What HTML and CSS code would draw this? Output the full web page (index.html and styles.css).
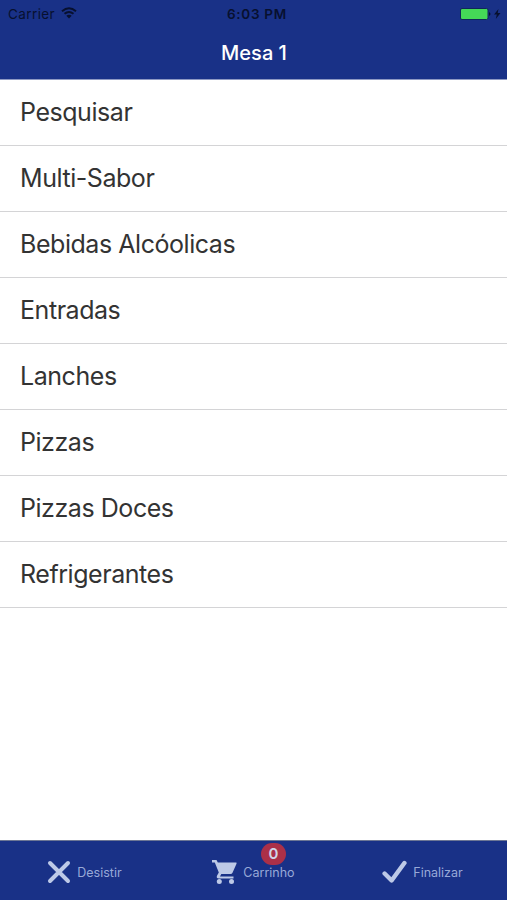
FILE: index.html
```html
<!DOCTYPE html>
<html lang="pt">
<head>
<meta charset="utf-8">
<title>Mesa 1</title>
<link rel="stylesheet" href="styles.css">
</head>
<body>
<header class="header">
  <div class="status">
    <div class="carrier"><span>Carrier</span>
      <svg width="16" height="12" viewBox="0 0 16 12" fill="none" stroke="#07102f" stroke-width="1.9"><path d="M1 4.200Q8-1.800 15 4.200M3.500 6.800Q8 3 12.500 6.800"/><path d="M5.300 8.800Q8 6.800 10.700 8.800L8 11.500z" fill="#07102f" stroke="none"/></svg>
    </div>
    <div class="clock">6:03 PM</div>
    <div class="power">
      <svg width="41" height="12" viewBox="0 0 41 12"><rect x="0.500" y="0.500" width="27.500" height="11" rx="1.500" fill="#45d957" stroke="#102759"/><path d="M29 4q3 2 0 4z" fill="#07102f"/><path d="M38.500 1l-4.500 5.500h2.800l-1 4.500 4.700-6h-2.800z" fill="#07102f"/></svg>
    </div>
  </div>
  <h1 class="title">Mesa 1</h1>
</header>
<main class="list">
  <div class="row"><span>Pesquisar</span></div>
  <div class="row"><span>Multi-Sabor</span></div>
  <div class="row"><span>Bebidas Alcóolicas</span></div>
  <div class="row"><span>Entradas</span></div>
  <div class="row"><span>Lanches</span></div>
  <div class="row"><span>Pizzas</span></div>
  <div class="row"><span>Pizzas Doces</span></div>
  <div class="row"><span>Refrigerantes</span></div>
</main>
<nav class="tabs">
  <div class="tab"><svg width="24" height="24" viewBox="0 0 24 24" fill="none" stroke="#bdc9e7" stroke-width="4" stroke-linecap="round"><path d="M3 3l18 18M21 3L3 21"/></svg><span>Desistir</span></div>
  <div class="tab cart"><svg width="25" height="24" viewBox="0 0 25 24" fill="#bdc9e7"><path d="M0 0h4.500l1.300 2.500H24q1 0 .5 1.300l-4 9q-.6 1.200-2 1.200H9.300l-1.300 2.500h13.500V18.500H7q-3.200-.2-1.900-3.100l1.700-2.800L2.800 2.500H0z"/><circle cx="7.300" cy="21.500" r="2.500"/><circle cx="19.500" cy="21.500" r="2.500"/></svg><span>Carrinho</span><b class="badge">0</b></div>
  <div class="tab"><svg width="25" height="24" viewBox="0 0 25 24" fill="none" stroke="#bdc9e7" stroke-width="4.400" stroke-linecap="round"><path d="M2.600 13.500l7 7L22.400 3" stroke-linejoin="round"/></svg><span>Finalizar</span></div>
</nav>
</body>
</html>
```
FILE: styles.css
```css
* { box-sizing: border-box; }
body { margin: 0; height: 900px; display: flex; flex-direction: column; overflow: hidden; background: #fff; font-family: Inter, sans-serif; color: #333; }
.header { height: 80px; background: #193187; border-bottom: 1px solid #8e99c3; }
.status { height: 27px; display: grid; grid-template-columns: 1fr 1fr 1fr; align-items: center; padding: 0 6px 0 8px; color: #07102f; font-size: 13.500px; }
.carrier { display: flex; align-items: center; gap: 6px; letter-spacing: 0.4px; }
.carrier svg { margin-top: -2px; }
.clock { padding-left: 5px; text-align: center; font-weight: 600; letter-spacing: 0.7px; }
.power { display: flex; justify-content: flex-end; }
.title { margin: 11px 0 0; padding-left: 1px; text-align: center; color: #fff; font-size: 20px; line-height: 30px; font-weight: 500; }
.list { flex: 1; }
.row { height: 66px; display: flex; align-items: center; padding: 0 0 2px 20px; border-bottom: 1px solid #d4d4d6; font-size: 25px; letter-spacing: -0.45px; }
.tabs { height: 60px; display: grid; grid-template-columns: 1fr 1fr 1fr; background: #193187; border-top: 1px solid #6d7795; }
.tab { position: relative; display: flex; align-items: center; justify-content: center; gap: 6px; padding: 3px 0 0; color: #98a9d8; font-size: 12.500px; }
.tab span { padding-top: 1px; }
.badge { position: absolute; left: 92px; top: 2px; width: 25px; height: 22px; border-radius: 11px; background: #ab3048; color: #d0d5e9; text-align: center; line-height: 22px; font-size: 15px; font-weight: 600; }
```
